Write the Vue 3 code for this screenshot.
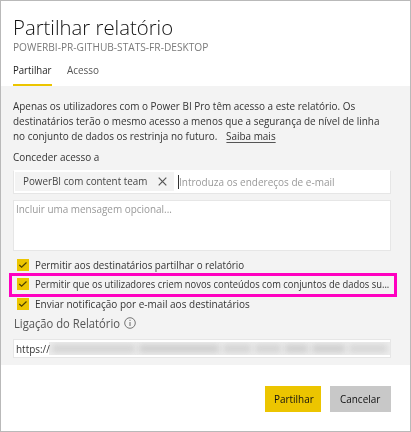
<script setup>
import { ref } from 'vue'

const intro = [
  'Apenas os utilizadores com o Power BI Pro têm acesso a este relatório. Os',
  'destinatários terão o mesmo acesso a menos que a segurança de nível de linha',
]
const options = ref([
  { label: 'Permitir aos destinatários partilhar o relatório', kind: 'first' },
  { label: 'Permitir que os utilizadores criem novos conteúdos com conjuntos de dados su...', kind: 'marked' },
  { label: 'Enviar notificação por e-mail aos destinatários', kind: 'last' },
])
</script>

<template>
  <div class="dialog">
    <header class="head">
      <h1 class="title"><span class="t">Partilhar relatório</span></h1>
      <div class="subtitle"><span class="t">POWERBI-PR-GITHUB-STATS-FR-DESKTOP</span></div>
      <nav class="tabs">
        <a class="tab active"><span class="t">Partilhar</span></a>
        <a class="tab"><span class="t">Acesso</span></a>
      </nav>
    </header>

    <main class="panel">
      <div class="intro">
        <div v-for="line in intro" :key="line"><span class="t">{{ line }}</span></div>
        <div><span class="t">no conjunto de dados os restrinja no futuro.<a class="more">Saiba mais</a></span></div>
      </div>
      <div class="label"><span class="t">Conceder acesso a</span></div>

      <div class="field recipients">
        <div class="chip">
          <span class="chip-text"><span class="t">PowerBI com content team</span></span>
          <svg class="x" width="9" height="9" viewBox="0 0 9 9"><path d="M.7.7l7.6 7.6M8.3.7L.7 8.3" fill="none" stroke="#555" stroke-width="1.2" /></svg>
        </div>
        <i class="caret"></i>
        <span class="hint"><span class="t">Introduza os endereços de e-mail</span></span>
      </div>

      <div class="field message"><span class="t">Incluir uma mensagem opcional...</span></div>

      <div class="options">
        <div v-for="o in options" :key="o.kind" class="option" :class="o.kind">
          <span class="check">
            <svg width="12" height="12" viewBox="0 0 12 12"><path d="M2.3 6l2.3 2.2 4.9-4.7" fill="none" stroke="#4d4100" stroke-width="1.2" /></svg>
          </span>
          <span class="t">{{ o.label }}</span>
        </div>
      </div>

      <div class="link-label">
        <span class="link-text"><span class="t">Ligação do Relatório</span></span>
        <svg width="12" height="12" viewBox="0 0 12 12">
          <circle cx="6" cy="6" r="5.3" fill="none" stroke="#666" stroke-width=".9" />
          <path d="M6 5v4M6 2.8v1.1" stroke="#666" stroke-width="1" />
        </svg>
      </div>
      <div class="field link">
        <span class="proto"><span class="t">https://</span></span>
        <span class="veil">
          <i class="smudge a"></i><i class="smudge b"></i><i class="smudge c"></i><i class="smudge d"></i><i class="smudge e"></i><i class="smudge f"></i><i class="smudge g"></i>
        </span>
      </div>
    </main>

    <footer class="foot">
      <button class="btn primary"><span class="t">Partilhar</span></button>
      <button class="btn secondary"><span class="t">Cancelar</span></button>
    </footer>
  </div>
</template>

<style>
body { margin: 0; background: #fff; }
</style>

<style scoped>
.dialog {
  box-sizing: border-box;
  width: 411px;
  height: 432px;
  border: 1px solid #b9b9b9;
  background: #fff;
  color: #333;
  font-family: "Open Sans", "Noto Sans", sans-serif;
  font-size: 11.5px;
  overflow: hidden;
  display: flex;
  flex-direction: column;
}
/* Slightly narrowed lettering */
.t {
  display: inline-block;
  white-space: nowrap;
  transform: scaleX(.864);
  transform-origin: left center;
}
.head { height: 85px; padding: 14px 12px 0; box-sizing: border-box; flex: none; }
.title { margin: 0; height: 25px; font-size: 21px; line-height: 25px; font-weight: 300; color: #111; }
.title .t { transform: scaleX(.968); }
.subtitle { height: 14px; line-height: 13px; font-size: 11px; color: #7a7a7a; }
.subtitle .t { transform: scaleX(.923); }
.tabs { display: flex; gap: 15px; height: 32px; }
.tab { width: 39px; box-sizing: border-box; height: 32px; padding-top: 8px; line-height: 16px; color: #555; }
.tab.active { color: #222; border-bottom: 2px solid #ecc500; }
.tab.active .t { transform: scaleX(.835); }

.panel { height: 279px; box-sizing: border-box; padding: 12px 19px 0 12px; background: #f3f3f3; flex: none; }
.intro { line-height: 15px; height: 45px; }
.more { display: inline-block; margin-left: 10px; line-height: 13px; border-bottom: 1px solid #555; }
.label { margin-top: 6px; height: 15px; line-height: 15px; }

.field { box-sizing: border-box; background: #fff; border: 1px solid #e6e6e6; }
.recipients { height: 24px; margin-top: 6px; padding-left: 1px; display: flex; align-items: center; border-top-color: #fff; }
.chip { display: flex; align-items: center; width: 159px; height: 19px; background: #f3f3f3; padding-left: 8px; box-sizing: border-box; margin-top: -1px; color: #444; }
.chip-text { width: 135px; line-height: 18px; height: 19px; }
.chip-text .t { transform: scaleX(.855); }
.x { flex: none; }
.caret { width: 1px; height: 14px; background: #333; margin: 0 0 0 4px; }
.hint { color: #999; line-height: 18px; }
.hint .t { transform: scaleX(.87); }
.message { height: 51px; margin-top: 6px; padding: 0 0 0 2px; line-height: 16px; color: #999; }

.options { margin: 6px 0 0 -4px; }
.option { display: flex; align-items: center; box-sizing: border-box; gap: 6px; padding-left: 8px; }
.option .t { line-height: 16px; }
.first { height: 16px; padding-bottom: 1px; }
.first .t { transform: scaleX(.85); }
.marked { height: 24px; width: 388px; border: 3px solid #ff00c0; padding: 0 0 2px 5px; }
.marked .t { transform: scaleX(.816); }
.last { height: 14px; }
.last .t { transform: scaleX(.87); }
.check { flex: none; width: 12px; height: 12px; background: #ecc500; }
.check svg { display: block; }

.link-label { display: flex; align-items: center; height: 16px; margin-top: 4px; padding-left: 1px; color: #555; }
.link-text { width: 110px; font-size: 12.2px; line-height: 16px; padding-top: 2px; }
.link-text .t { transform: scaleX(.92); }
.link-label svg { margin-top: -1px; }
.link { height: 19px; margin-top: 8px; display: flex; align-items: center; padding-left: 2px; }
.proto { width: 33px; flex: none; line-height: 16px; color: #333; }
.veil { display: flex; flex: 1; height: 13px; align-items: center; gap: 4px; background: #ededed; padding: 0 3px; overflow: hidden; }
.smudge { height: 7px; background: #cfcfcf; filter: blur(3px); }
.a { width: 84px; }
.b { width: 82px; background: #c9c9c9; }
.c { width: 28px; }
.d { width: 26px; }
.e { width: 24px; background: #c9c9c9; }
.f { width: 33px; background: #c9c9c9; }
.g { width: 39px; background: #d2d2d2; }

.foot { display: flex; gap: 9px; padding: 21px 19px 0 0; justify-content: flex-end; }
.btn { border: 0; margin: 0; padding: 0 0 0 9px; height: 26px; font: inherit; text-align: left; color: #111; line-height: 24px; overflow: hidden; }
.primary { width: 56px; background: #ecc500; }
.secondary { width: 61px; background: #c8c8c8; padding-left: 10px; }
</style>
